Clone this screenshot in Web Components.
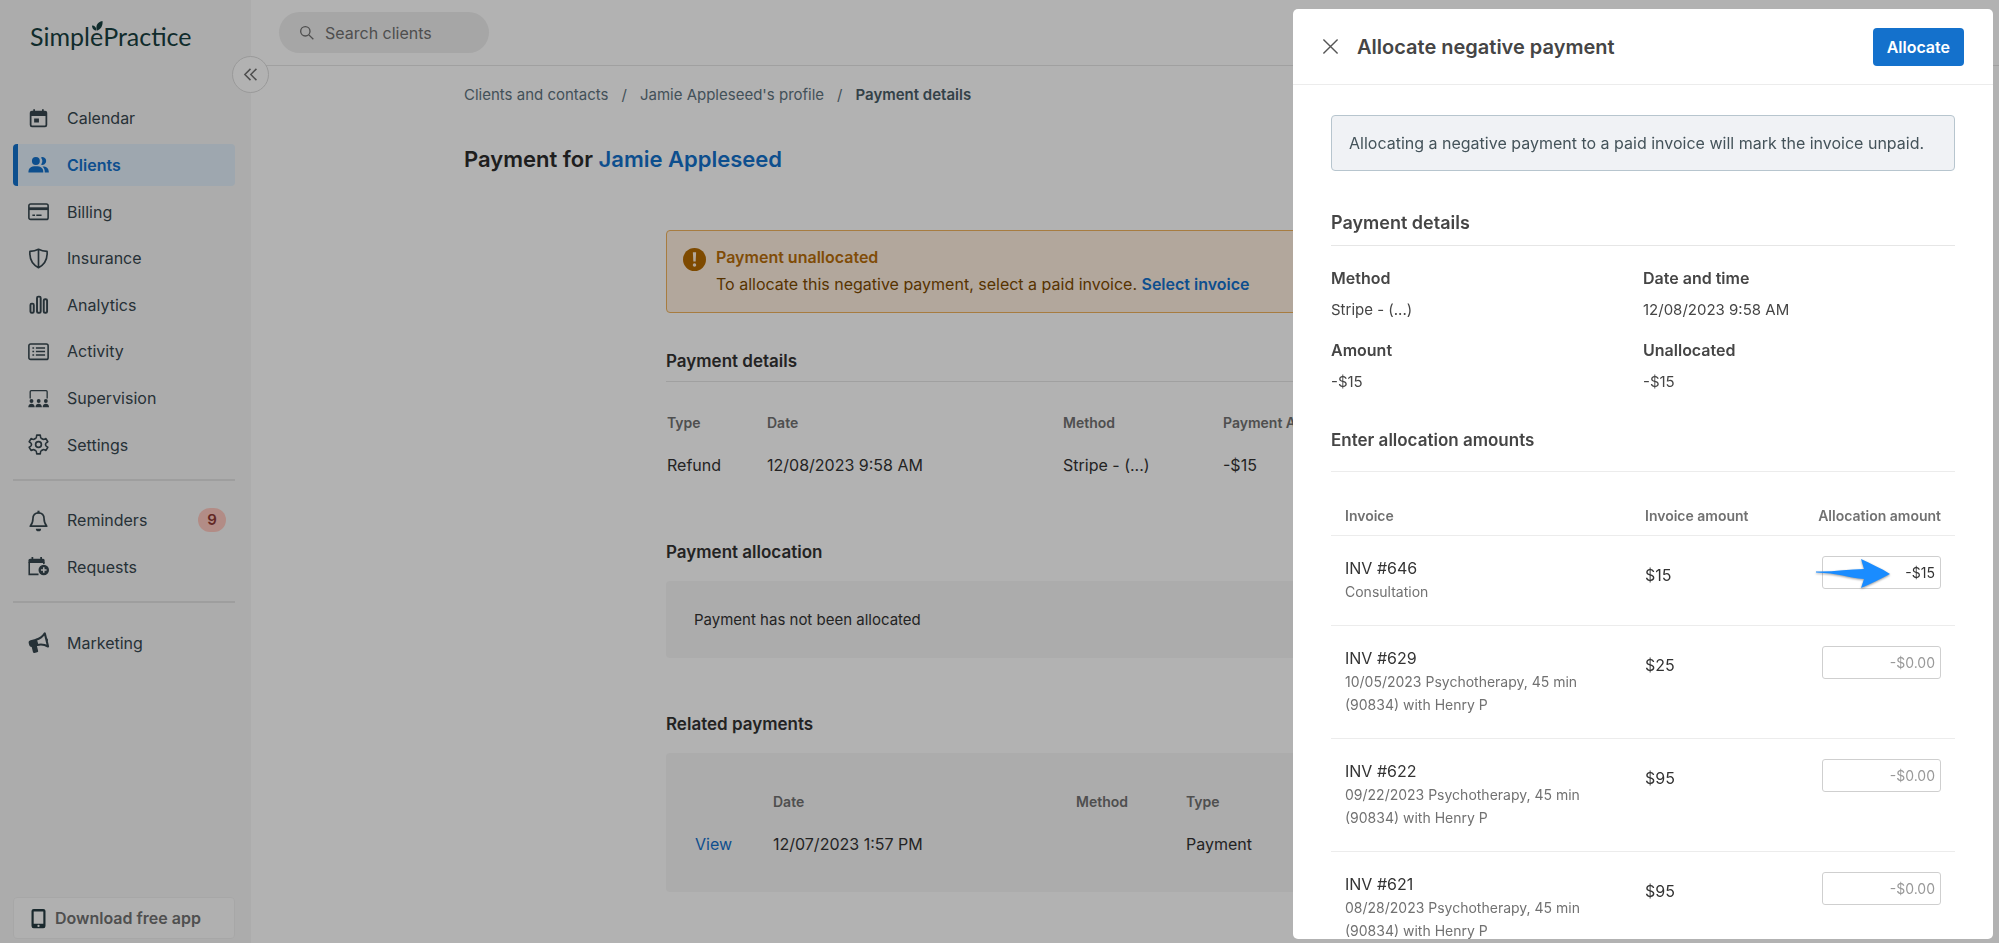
<!DOCTYPE html>
<html lang="en">
<head>
<meta charset="utf-8">
<meta name="viewport" content="width=device-width, initial-scale=1">
<title>Payment details</title>
<style>
:root {
  --blue: #1471cc;
  --ink: #333;
  --ink-nav: #37474f;
  --muted: #717171;
  --line: #ececec;
  --soft: #f7f7f7;
}
html, body { height: 100%; }
body {
  margin: 0;
  overflow: hidden;
  background: #fff;
  color: var(--ink);
  font: 16px/24px Inter, "Liberation Sans", sans-serif;
}
</style>
</head>
<body>
<sp-app></sp-app>

<script>
const ICONS = {
  calendar: `<path d="M7 1.500v3M17 1.500v3" stroke="currentColor" stroke-width="2"/><path fill-rule="evenodd" fill="currentColor" d="M4.500 3h15A2.500 2.500 0 0 1 22 5.500v14a2.500 2.500 0 0 1-2.500 2.500h-15A2.500 2.500 0 0 1 2 19.500v-14A2.500 2.500 0 0 1 4.500 3zM4 9v10.500a.6.6 0 0 0 .6.5h14.800a.6.6 0 0 0 .6-.5V9zM7 12h5.500v4.500H7z"/>`,
  clients: `<g fill="currentColor"><circle cx="9" cy="8" r="4.500"/><path d="M.5 21c0-5 2.700-7 8.500-7s8.500 2 8.500 7z"/><path d="M14.800 3.900a4.400 4.400 0 1 1 0 8.200 6 6 0 0 0 0-8.200zM19.200 21c0-2.800-.8-5-2.600-6.700 4.900 0 7.200 2.200 7.200 6.700z"/></g>`,
  billing: `<rect x="1" y="3.500" width="22" height="17.500" rx="2" fill="none" stroke="currentColor" stroke-width="1.800"/><path d="M1 8.800h22" stroke="currentColor" stroke-width="3.200"/><path d="M5 16.200h3M9.500 16.200h6" stroke="currentColor" stroke-width="1.800"/>`,
  insurance: `<path d="M12 1.500c3 1.600 6.200 2.300 9.800 2.400.6 8.200-2.500 14.800-9.800 18.600C4.700 18.700 1.600 12.100 2.200 3.900 5.800 3.800 9 3.100 12 1.500zM12 2v20" fill="none" stroke="currentColor" stroke-width="1.900" stroke-linejoin="round"/>`,
  analytics: `<g fill="none" stroke="currentColor" stroke-width="2.200"><rect x="2.800" y="11" width="3.800" height="10.500" rx="1.500"/><rect x="10.300" y="3" width="4.200" height="18.500" rx="1.500"/><rect x="18" y="6" width="3.800" height="15.500" rx="1.500"/></g>`,
  activity: `<rect x="1" y="3.500" width="22" height="17.500" rx="2" fill="none" stroke="currentColor" stroke-width="1.800"/><path d="M5 8h2M5 12h2M5 16h2M9 8h10.500M9 12h10.500M9 16h10.500" stroke="currentColor" stroke-width="1.900"/>`,
  supervision: `<path d="M2.500 12V4.200A1.200 1.200 0 0 1 3.700 3h17a1.200 1.200 0 0 1 1.200 1.200V12" fill="none" stroke="currentColor" stroke-width="1.500"/><g fill="currentColor"><circle cx="4" cy="14.800" r="2.200"/><circle cx="12.200" cy="14.800" r="2.200"/><circle cx="20.400" cy="14.800" r="2.200"/><path d="M.3 22c0-5.200 7.400-5.200 7.400 0zM8.500 22c0-5.200 7.400-5.200 7.400 0zM16.700 22c0-5.200 7.400-5.200 7.400 0z"/></g>`,
  settings: `<g fill="none" stroke="currentColor" stroke-width="1.900" stroke-linejoin="round"><path d="M10 1.200h4q.4 3.400 1 3.600l2.200 1.300q.5.300 3.300-.9l2.100 3.600q-2.600 1.800-2.500 2.300v1.800q-.1.500 2.500 2.300l-2.100 3.600q-2.800-1.200-3.300-.9L15 19.200q-.6.200-1 3.600h-4q-.4-3.400-1-3.600l-2.200-1.300q-.5-.3-3.300.9l-2.100-3.600q2.600-1.800 2.500-2.300v-1.800q.1-.5-2.500-2.300l2.100-3.600q2.800 1.200 3.300.9L9 4.800q.6-.2 1-3.600z"/><circle cx="12" cy="12" r="3.300"/></g>`,
  bell: `<path d="M12 3.200c-4 0-6.300 2.800-6.300 6.300 0 5-1.300 6.900-3.200 9h19c-1.900-2.100-3.200-4-3.200-9 0-3.500-2.300-6.300-6.300-6.300z" fill="none" stroke="currentColor" stroke-width="1.900" stroke-linejoin="round"/><path d="M12 .8v3" stroke="currentColor" stroke-width="2.400"/><path d="M9 21.300h6a3 3 0 0 1-6 0z" fill="currentColor"/>`,
  requests: `<path d="M5 1v4M15 1v4" stroke="currentColor" stroke-width="2"/><path d="M.5 8V4.800A1.800 1.800 0 0 1 2.300 3h14.900A1.800 1.800 0 0 1 19 4.800V8z" fill="currentColor"/><path d="M1.400 7v14H12M18.100 7v2" fill="none" stroke="currentColor" stroke-width="1.800"/><circle cx="18" cy="16" r="6" fill="currentColor"/><path d="M18 12.800v6.400M14.800 16h6.400" stroke="var(--soft)" stroke-width="1.800"/>`,
  marketing: `<g transform="rotate(-14 12 12)"><path d="M10.500 7.200H3.800A2.800 2.800 0 0 0 1 10v2.500a2.800 2.800 0 0 0 2.200 2.700V21c0 1 .5 1.500 1.500 1.500h3.100c1 0 1.500-.5 1.500-1.500v-5.600h1.200z" fill="currentColor"/><path d="M10 8.200c4.500 0 8-1.300 11.500-4.700v15.600c-3.500-3.400-7-4.700-11.500-4.700z" fill="none" stroke="currentColor" stroke-width="2.400" stroke-linejoin="round"/><path d="M22 9.500c1.600.4 1.600 3.400 0 3.800z" fill="currentColor"/></g>`,
  phone: `<path fill-rule="evenodd" fill="currentColor" d="M6.500 1h11A2.500 2.500 0 0 1 20 3.500v17a2.500 2.500 0 0 1-2.500 2.500h-11A2.500 2.500 0 0 1 4 20.500v-17A2.500 2.500 0 0 1 6.500 1zM6.500 4v14h11V4zM12 19.200a1.300 1.300 0 1 0 0 2.600 1.300 1.300 0 0 0 0-2.600z"/>`,
  search: `<g fill="none" stroke="currentColor" stroke-width="2"><circle cx="9.500" cy="9.500" r="7"/><path d="M14.800 14.800l6.700 6.700"/></g>`,
  collapse: `<path d="M12 3l-9 9 9 9M21.500 3l-9 9 9 9" fill="none" stroke="currentColor" stroke-width="2.400"/>`,
  close: `<path d="M2 2l20 20M22 2L2 22" fill="none" stroke="currentColor" stroke-width="2"/>`,
  warning: `<circle cx="12" cy="12" r="12" fill="currentColor"/><path d="M10.300 4.500h3.400l-.5 9.500h-2.400z" fill="#fff0e0"/><circle cx="12" cy="17.700" r="1.800" fill="#fff0e0"/>`,
};

class SpIcon extends HTMLElement {
  constructor() {
    super();
    this.attachShadow({ mode: "open" });
  }

  connectedCallback() {
    const size = this.getAttribute("size") || 21;
    this.shadowRoot.innerHTML = `
<style>
:host { display: inline-flex; flex: none; }
svg { display: block; overflow: visible; }
</style>
<svg width="${size}" height="${size}" viewBox="0 0 24 24" aria-hidden="true">${ICONS[this.getAttribute("name")] || ""}</svg>`;
  }
}

/* Base for elements whose markup never changes after creation. */
class SpElement extends HTMLElement {
  constructor() {
    super();
    this.attachShadow({ mode: "open" }).innerHTML =
      `<style>*, ::before { box-sizing: border-box; }${this.constructor.css}</style>${this.constructor.html}`;
  }
}

class SpLogo extends SpElement {
  static css = `
:host { display: block; }
a { color: #17403f; text-decoration: none; font: 25px/32px Lato, "Open Sans", sans-serif; }
.e { position: relative; }
svg { position: absolute; left: 2px; top: 0; }
`;
  static html = `<a href="#" aria-label="SimplePractice">Simpl<span class="e">e<svg width="11" height="10" viewBox="0 0 22 20" fill="currentColor" aria-hidden="true"><path d="M10 19C7 12 9 2 21 0c1 9-3 16-10 19z"/><path d="M9 19C4 19 0 15 0 9c6 0 9 4 9 10z"/></svg></span>Practice</a>`;
}

/* <sp-nav-item icon="calendar" [active] [count="9"]>Calendar</sp-nav-item> */
class SpNavItem extends HTMLElement {
  constructor() {
    super();
    this.attachShadow({ mode: "open" });
  }

  connectedCallback() {
    const count = this.getAttribute("count");
    this.shadowRoot.innerHTML = `
<style>
:host { display: flex; align-items: center; }
a {
  box-sizing: border-box;
  display: flex;
  flex: 1;
  align-items: center;
  gap: 18px;
  height: 42px;
  padding: 0 9px 0 10px;
  border-left: 5px solid transparent;
  border-radius: 4px;
  color: var(--ink-nav);
  text-decoration: none;
}
:host([active]) a { background: #e2f0fb; border-color: var(--blue); color: var(--blue); font-weight: 600; }
.label { flex: 1; }
.count {
  width: 28px;
  border-radius: 12px;
  background: #ffc9c0;
  color: #8e3a35;
  font-size: 15px;
  font-weight: 600;
  text-align: center;
}
</style>
<a href="#"><sp-icon name="${this.getAttribute("icon")}"></sp-icon><span class="label"><slot></slot></span>${count ? `<span class="count">${count}</span>` : ""}</a>`;
  }
}

class SpSidebar extends SpElement {
  static css = `
:host {
  display: flex;
  flex-direction: column;
  width: 251px;
  padding: 20px 16px 4px 13px;
  background: var(--soft);
}
sp-logo { margin: 0 0 43px 17px; }
nav { flex: 1; }
.group { display: grid; grid-auto-rows: 1fr; }
.group.main { height: 373px; }
.group.alerts { height: 93px; }
.group.more { height: 47px; }
.group + .group { position: relative; margin-top: 29px; }
.group + .group::before { content: ""; position: absolute; left: 0; right: 0; top: -18px; border-top: 2px solid #e2e2e2; }
.download {
  display: flex;
  align-items: center;
  gap: 6px;
  width: 100%;
  height: 42px;
  padding: 0 14px;
  border: 1px solid #f0f0f0;
  border-radius: 4px;
  background: #fdfdfd;
  color: var(--muted);
  font: inherit;
  font-weight: 600;
}
.download sp-icon { color: #263c42; }
`;
  static html = `
<sp-logo></sp-logo>
<nav aria-label="Main">
  <div class="group main">
    <sp-nav-item icon="calendar">Calendar</sp-nav-item>
    <sp-nav-item icon="clients" active>Clients</sp-nav-item>
    <sp-nav-item icon="billing">Billing</sp-nav-item>
    <sp-nav-item icon="insurance">Insurance</sp-nav-item>
    <sp-nav-item icon="analytics">Analytics</sp-nav-item>
    <sp-nav-item icon="activity">Activity</sp-nav-item>
    <sp-nav-item icon="supervision">Supervision</sp-nav-item>
    <sp-nav-item icon="settings">Settings</sp-nav-item>
  </div>
  <div class="group alerts">
    <sp-nav-item icon="bell" count="9">Reminders</sp-nav-item>
    <sp-nav-item icon="requests">Requests</sp-nav-item>
  </div>
  <div class="group more">
    <sp-nav-item icon="marketing">Marketing</sp-nav-item>
  </div>
</nav>
<button class="download" type="button"><sp-icon name="phone"></sp-icon>Download free app</button>`;
}

class SpTopbar extends SpElement {
  static css = `
:host { display: block; position: relative; padding: 12px 28px; border-bottom: 1px solid #e6e6e6; }
.search {
  display: flex;
  align-items: center;
  gap: 10px;
  width: 210px;
  height: 41px;
  padding: 0 20px;
  border-radius: 21px;
  background: #eee;
  color: var(--muted);
}
input { flex: 1; min-width: 0; padding: 0; border: 0; outline: 0; background: none; color: inherit; font: inherit; }
input::placeholder { color: inherit; opacity: 1; }
.collapse {
  position: absolute;
  left: -19px;
  top: 56px;
  display: grid;
  place-items: center;
  width: 37px;
  height: 37px;
  padding: 0;
  border: 1px solid #dcdcdc;
  border-radius: 50%;
  background: #fff;
  color: var(--muted);
}
`;
  static html = `
<label class="search"><sp-icon name="search" size="16"></sp-icon><input type="text" placeholder="Search clients" aria-label="Search clients"></label>
<button class="collapse" type="button" aria-label="Collapse menu"><sp-icon name="collapse" size="15"></sp-icon></button>`;
}

class SpBreadcrumbs extends SpElement {
  static css = `
:host { display: block; font-size: 15px; line-height: 22px; }
nav { display: flex; gap: 13px; color: #5f7480; }
a { color: inherit; text-decoration: none; }
b { color: #4a5d68; font-weight: 600; }
`;
  static html = `
<nav aria-label="Breadcrumb">
  <a href="#">Clients and contacts</a><span>/</span>
  <a href="#">Jamie Appleseed's profile</a><span>/</span>
  <b aria-current="page">Payment details</b>
</nav>`;
}

class SpAlert extends SpElement {
  static css = `
:host {
  display: flex;
  gap: 10px;
  padding: 13px 16px 14px;
  border: 1px solid #efb25c;
  border-radius: 4px;
  background: #fff0e0;
  color: #7d4a00;
  line-height: 27px;
}
sp-icon { margin-top: 4px; color: #b56a00; }
::slotted(strong) { display: block; color: #b86e0b; font-weight: 600; }
::slotted(a) { color: var(--blue); font-weight: 600; text-decoration: none; }
`;
  static html = `<sp-icon name="warning" size="23"></sp-icon><div><slot></slot></div>`;
}

/* <sp-section heading="..." [ruled] [boxed]> */
class SpSection extends HTMLElement {
  constructor() {
    super();
    this.attachShadow({ mode: "open" });
  }

  connectedCallback() {
    this.shadowRoot.innerHTML = `
<style>
:host { display: block; }
h2 { margin: 0; font-size: var(--heading-size, 17px); line-height: 24px; font-weight: 600; color: var(--heading, #333); }
:host([ruled]) h2 { padding-bottom: var(--heading-gap, 8px); border-bottom: 1px solid #e6e6e6; }
:host([boxed]) .body { margin-top: 17px; border-radius: 4px; background: var(--soft); }
</style>
<section><h2>${this.getAttribute("heading")}</h2><div class="body"><slot></slot></div></section>`;
  }
}

/* <sp-data-table columns="[[label, width], ...]" row="[cell, ...]"> */
class SpDataTable extends HTMLElement {
  constructor() {
    super();
    this.attachShadow({ mode: "open" });
  }

  connectedCallback() {
    const columns = JSON.parse(this.getAttribute("columns"));
    const row = JSON.parse(this.getAttribute("row"));
    const cell = (v) => (v === "View" ? `<a href="#">View</a>` : v);
    this.shadowRoot.innerHTML = `
<style>
:host { display: block; }
table { width: 100%; border-collapse: collapse; table-layout: fixed; }
th, td { padding: 0 0 10px 1px; text-align: left; }
th { color: var(--muted); font-size: 14px; line-height: 20px; font-weight: 600; white-space: nowrap; }
td { padding-top: 10px; }
thead td { padding: 0; }
a { color: var(--blue); text-decoration: none; }
</style>
<table>
  <colgroup>${columns.map(([, w]) => `<col${w ? ` style="width:${w}px"` : ""}>`).join("")}</colgroup>
  <thead><tr>${columns.map(([label]) => (label ? `<th scope="col">${label}</th>` : "<td></td>")).join("")}</tr></thead>
  <tbody><tr>${row.map((v) => `<td>${cell(v)}</td>`).join("")}</tr></tbody>
</table>`;
  }
}

class SpPaymentPage extends SpElement {
  static css = `
:host { display: block; padding: 18px 40px; }
.page { max-width: 1322px; margin: 0 auto; }
h1 { margin: 37px 0 0; font-size: 22px; line-height: 32px; font-weight: 600; color: #2b2b2b; }
h1 a { color: var(--blue); text-decoration: none; }
.column { max-width: 918px; margin: 55px auto 0; }
.details { margin-top: 36px; }
.details sp-data-table { margin-top: 31px; }
.allocation { margin-top: 53px; }
.allocation p { margin: 0; padding: 27px 28px 26px; font-size: 15px; }
.related { margin-top: 54px; }
.related sp-data-table { padding: 39px 28px 26px; }
`;
  static html = `
<div class="page">
  <sp-breadcrumbs></sp-breadcrumbs>
  <h1>Payment for <a href="#">Jamie Appleseed</a></h1>
  <div class="column">
    <sp-alert><strong>Payment unallocated</strong>To allocate this negative payment, select a paid invoice. <a href="#">Select invoice</a></sp-alert>
    <sp-section class="details" heading="Payment details" ruled>
      <sp-data-table columns='[["Type",100],["Date",296],["Method",160],["Payment Amount",0]]'
        row='["Refund","12/08/2023 9:58 AM","Stripe - (...)","-$15"]'></sp-data-table>
    </sp-section>
    <sp-section class="allocation" heading="Payment allocation" boxed>
      <p>Payment has not been allocated</p>
    </sp-section>
    <sp-section class="related" heading="Related payments" boxed>
      <sp-data-table columns='[["",78],["Date",303],["Method",110],["Type",0]]'
        row='["View","12/07/2023 1:57 PM","","Payment"]'></sp-data-table>
    </sp-section>
  </div>
</div>`;
}

class SpAllocationTable extends HTMLElement {
  constructor() {
    super();
    this.attachShadow({ mode: "open" });
    this._invoices = [];
  }

  set invoices(v) { this._invoices = v; this._render(); }

  _render() {
    const rows = this._invoices.map(({ id, note, amount, value }) => `
<tr>
  <td><div class="inv">INV #${id}</div><div class="note">${note}</div></td>
  <td class="amount">${amount}</td>
  <td class="alloc">
    <input type="text" placeholder="-$0.00" value="${value || ""}" aria-label="Allocation amount for INV #${id}">
    ${value ? `<svg class="pointer" width="76" height="32" viewBox="0 0 76 32" aria-hidden="true"><path d="M1 13.500C18 14 34 11 49 11L46 1C56 6 66 10 75 16C66 21 57 25 46 30L49 21C35 20 22 15 1 14.500z" fill="#1a8cff"/></svg>` : ""}
  </td>
</tr>`).join("");

    this.shadowRoot.innerHTML = `
<style>
:host { display: block; }
table { width: 100%; border-collapse: collapse; table-layout: fixed; }
th { padding: 0 0 9px; color: var(--muted); font-size: 14px; line-height: 20px; font-weight: 600; text-align: left; white-space: nowrap; }
th:first-child, td:first-child { width: 300px; padding-left: 14px; }
th:last-child { text-align: right; }
th:last-child, td:last-child { padding-right: 14px; }
tr { border-bottom: 1px solid var(--line); }
td { padding: 20px 0 22px; vertical-align: top; }
.inv, .amount { color: var(--ink); }
.note { max-width: 240px; color: var(--muted); font-size: 14px; line-height: 23px; }
td.amount { padding-top: 27px; }
td.alloc { position: relative; text-align: right; line-height: 0; }
input {
  box-sizing: border-box;
  width: 119px;
  height: 33px;
  padding: 0 5px;
  border: 1px solid #cfcfcf;
  border-radius: 3px;
  color: var(--ink);
  font: 14px/20px Inter, "Liberation Sans", sans-serif;
  text-align: right;
}
input::placeholder { color: #999; opacity: 1; }
.pointer { position: absolute; right: 64px; top: 22px; filter: drop-shadow(0 1px 1px #0006); }
</style>
<table>
  <thead><tr><th scope="col">Invoice</th><th scope="col">Invoice amount</th><th scope="col">Allocation amount</th></tr></thead>
  <tbody>${rows}</tbody>
</table>`;
  }
}

class SpAllocateDrawer extends SpElement {
  static css = `
:host {
  --heading: #454545;
  position: fixed;
  top: 9px;
  right: 6px;
  bottom: 4px;
  display: flex;
  flex-direction: column;
  width: 700px;
  max-width: 100%;
  overflow: hidden;
  border-radius: 5px;
  background: #fff;
  color: #454545;
}
header {
  display: flex;
  align-items: center;
  gap: 18px;
  height: 76px;
  padding: 0 29px;
  border-bottom: 1px solid var(--line);
}
h1 { flex: 1; margin: 0; font-size: 20px; line-height: 28px; font-weight: 600; }
button { border: 0; background: none; padding: 0; color: inherit; font: inherit; }
.close { display: grid; color: #555; }
.primary { height: 38px; padding: 0 14px; border-radius: 4px; background: var(--blue); color: #fff; font-weight: 600; }
.body { flex: 1; min-height: 0; overflow-y: auto; scrollbar-width: none; padding: 30px 38px; }
.note {
  margin: 0 0 40px;
  padding: 15px 17px;
  border: 1px solid #b7c5ce;
  border-radius: 4px;
  background: #f0f2f5;
  color: #44535a;
}
.details { --heading-size: 18px; --heading-gap: 10px; }
dl { display: grid; grid-template-columns: 1fr 1fr; row-gap: 16px; margin: 20px 0 34px; }
dt { font-weight: 600; }
dd { margin: 8px 0 0; font-size: 15px; }
.rule { margin: 19px 0 34px; border: 0; border-top: 1px solid var(--line); }
`;
  static html = `
<header>
  <button class="close" type="button" aria-label="Close"><sp-icon name="close" size="17"></sp-icon></button>
  <h1>Allocate negative payment</h1>
  <button class="primary" type="button">Allocate</button>
</header>
<div class="body">
  <p class="note">Allocating a negative payment to a paid invoice will mark the invoice unpaid.</p>
  <sp-section class="details" heading="Payment details" ruled>
    <dl>
      <div><dt>Method</dt><dd>Stripe - (...)</dd></div>
      <div><dt>Date and time</dt><dd>12/08/2023 9:58 AM</dd></div>
      <div><dt>Amount</dt><dd>-$15</dd></div>
      <div><dt>Unallocated</dt><dd>-$15</dd></div>
    </dl>
  </sp-section>
  <sp-section heading="Enter allocation amounts">
    <hr class="rule">
    <sp-allocation-table></sp-allocation-table>
  </sp-section>
</div>`;

  connectedCallback() {
    this.setAttribute("role", "dialog");
    this.setAttribute("aria-label", "Allocate negative payment");
    this.shadowRoot.querySelector("sp-allocation-table").invoices = [
      { id: 646, note: "Consultation", amount: "$15", value: "-$15" },
      { id: 629, note: "10/05/2023 Psychotherapy, 45 min (90834) with Henry P", amount: "$25" },
      { id: 622, note: "09/22/2023 Psychotherapy, 45 min (90834) with Henry P", amount: "$95" },
      { id: 621, note: "08/28/2023 Psychotherapy, 45 min (90834) with Henry P", amount: "$95" },
    ];
  }
}

class SpApp extends SpElement {
  static css = `
:host { display: grid; grid-template-columns: auto 1fr; height: 100vh; }
main { min-width: 0; }
.scrim { position: fixed; inset: 0; background: rgb(0 0 0 / 30%); }
`;
  static html = `
<sp-sidebar></sp-sidebar>
<main><sp-topbar></sp-topbar><sp-payment-page></sp-payment-page></main>
<div class="scrim"></div>
<sp-allocate-drawer></sp-allocate-drawer>`;
}

customElements.define("sp-icon", SpIcon);
customElements.define("sp-logo", SpLogo);
customElements.define("sp-nav-item", SpNavItem);
customElements.define("sp-sidebar", SpSidebar);
customElements.define("sp-topbar", SpTopbar);
customElements.define("sp-breadcrumbs", SpBreadcrumbs);
customElements.define("sp-alert", SpAlert);
customElements.define("sp-section", SpSection);
customElements.define("sp-data-table", SpDataTable);
customElements.define("sp-payment-page", SpPaymentPage);
customElements.define("sp-allocation-table", SpAllocationTable);
customElements.define("sp-allocate-drawer", SpAllocateDrawer);
customElements.define("sp-app", SpApp);
</script>
</body>
</html>
